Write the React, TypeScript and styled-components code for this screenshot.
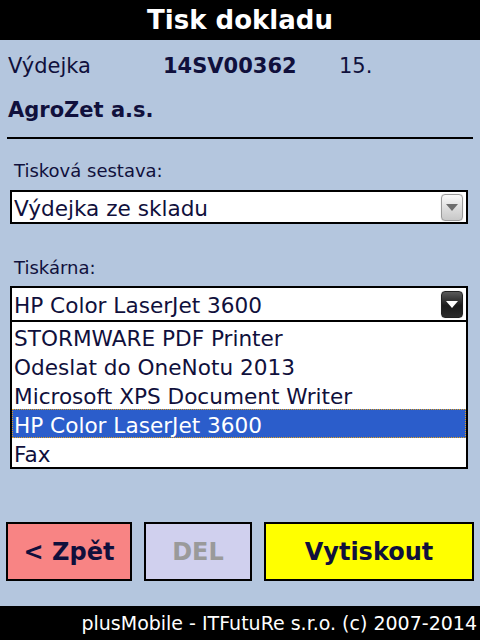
import React from "react";
import styled, { createGlobalStyle } from "styled-components";

const GlobalStyle = createGlobalStyle`
  html, body {
    margin: 0;
    padding: 0;
    background: #b4c6de;
  }
  #root {
    width: 480px;
    height: 640px;
  }
`;

const Screen = styled.div`
  width: 480px;
  height: 640px;
  display: flex;
  flex-direction: column;
  background: #b4c6de;
  font-family: "DejaVu Sans", Verdana, sans-serif;
  color: #10103c;
  overflow: hidden;
`;

const TitleBar = styled.div`
  height: 40px;
  background: #000;
  color: #fff;
  display: flex;
  align-items: center;
  justify-content: center;
  font-weight: bold;
  font-size: 26px;
`;

const InfoRow = styled.div<{ h: number }>`
  height: ${(p) => p.h}px;
  display: grid;
  grid-template-columns: 155px 176px 1fr;
  align-items: center;
  padding-left: 8px;
  padding-top: 2px;
  box-sizing: border-box;
  font-size: 21px;
`;

const Cell = styled.span<{ bold?: boolean }>`
  font-weight: ${(p) => (p.bold ? "bold" : "normal")};
  white-space: nowrap;
`;

const Divider = styled.div`
  height: 2px;
  margin: 9px 7px 0;
  background: #000;
`;

const Form = styled.div`
  display: flex;
  flex-direction: column;
  padding: 14px 12px 0 10px;
`;

const Label = styled.div<{ top: number }>`
  height: 32px;
  line-height: 32px;
  box-sizing: border-box;
  padding: 2px 0 0 4px;
  margin-top: ${(p) => p.top}px;
  font-size: 18px;
`;

const SelectBox = styled.div<{ top: number }>`
  margin-top: ${(p) => p.top}px;
  border: 2px solid #000;
  background: #fff;
  display: flex;
  flex-direction: column;
`;

const SelectHead = styled.div<{ open?: boolean }>`
  box-sizing: border-box;
  display: flex;
  align-items: center;
  justify-content: space-between;
  padding: 2px 3px 0 2px;
  font-size: 21.6px;
  border-bottom: ${(p) => (p.open ? "2px solid #000" : "none")};
  height: ${(p) => (p.open ? 34 : 30)}px;
`;

const ArrowBtn = styled.div<{ dark?: boolean }>`
  width: 20px;
  height: 25px;
  margin-top: -2px;
  border-radius: 4px;
  border: 1px solid ${(p) => (p.dark ? "#222" : "#9a9a9a")};
  background: ${(p) =>
    p.dark
      ? "linear-gradient(#5a5a5a, #1a1a1a 55%, #2a2a2a)"
      : "linear-gradient(#fafafa, #dcdcdc 55%, #c8c8c8)"};
  display: flex;
  align-items: center;
  justify-content: center;
  box-shadow: 0 0 1px rgba(0, 0, 0, 0.3);
`;

const Triangle = styled.div<{ dark?: boolean }>`
  width: 0;
  height: 0;
  border-left: 6px solid transparent;
  border-right: 6px solid transparent;
  border-top: 7px solid ${(p) => (p.dark ? "#fff" : "#6e6e6e")};
`;

const Option = styled.div<{ selected?: boolean }>`
  height: 29px;
  box-sizing: border-box;
  display: flex;
  align-items: center;
  padding: 3px 0 0 2px;
  font-size: 21.6px;
  white-space: nowrap;
  background: ${(p) => (p.selected ? "#2b5dcb" : "#fff")};
  color: ${(p) => (p.selected ? "#fff" : "#10103c")};
  outline: ${(p) => (p.selected ? "1px dotted #e0a020" : "none")};
  outline-offset: -1px;
`;

const Spacer = styled.div`
  flex: 1;
`;

const ButtonRow = styled.div`
  display: flex;
  gap: 12px;
  padding: 0 6px;
  height: 59px;
  margin-bottom: 25px;
`;

const Button = styled.div<{ bg: string; fg: string; w: number }>`
  width: ${(p) => p.w}px;
  box-sizing: border-box;
  border: 2px solid #000;
  background: ${(p) => p.bg};
  color: ${(p) => p.fg};
  display: flex;
  align-items: center;
  justify-content: center;
  font-weight: bold;
  font-size: 24px;
`;

const Footer = styled.div`
  height: 34px;
  background: #000;
  color: #fff;
  display: flex;
  align-items: center;
  justify-content: flex-end;
  padding-right: 3px;
  font-size: 19px;
`;

const printers = [
  "STORMWARE PDF Printer",
  "Odeslat do OneNotu 2013",
  "Microsoft XPS Document Writer",
  "HP Color LaserJet 3600",
  "Fax",
];

const App: React.FC = () => {
  const selected = "HP Color LaserJet 3600";
  return (
    <Screen>
      <GlobalStyle />
      <TitleBar>Tisk dokladu</TitleBar>
      <InfoRow h={50}>
        <Cell>Výdejka</Cell>
        <Cell bold>14SV00362</Cell>
        <Cell>15.</Cell>
      </InfoRow>
      <InfoRow h={38}>
        <Cell bold>AgroZet a.s.</Cell>
      </InfoRow>
      <Divider />
      <Form>
        <Label top={0}>Tisková sestava:</Label>
        <SelectBox top={5}>
          <SelectHead>
            <span>Výdejka ze skladu</span>
            <ArrowBtn>
              <Triangle />
            </ArrowBtn>
          </SelectHead>
        </SelectBox>
        <Label top={26}>Tiskárna:</Label>
        <SelectBox top={4}>
          <SelectHead open>
            <span>{selected}</span>
            <ArrowBtn dark>
              <Triangle dark />
            </ArrowBtn>
          </SelectHead>
          {printers.map((p) => (
            <Option key={p} selected={p === selected}>
              {p}
            </Option>
          ))}
        </SelectBox>
      </Form>
      <Spacer />
      <ButtonRow>
        <Button bg="#f88484" fg="#10103c" w={126}>
          &lt; Zpět
        </Button>
        <Button bg="#d0d0ee" fg="#9a9a9a" w={108}>
          DEL
        </Button>
        <Button bg="#ffff00" fg="#10103c" w={210}>
          Vytiskout
        </Button>
      </ButtonRow>
      <Footer>plusMobile - ITFutuRe s.r.o. (c) 2007-2014</Footer>
    </Screen>
  );
};

export default App;
